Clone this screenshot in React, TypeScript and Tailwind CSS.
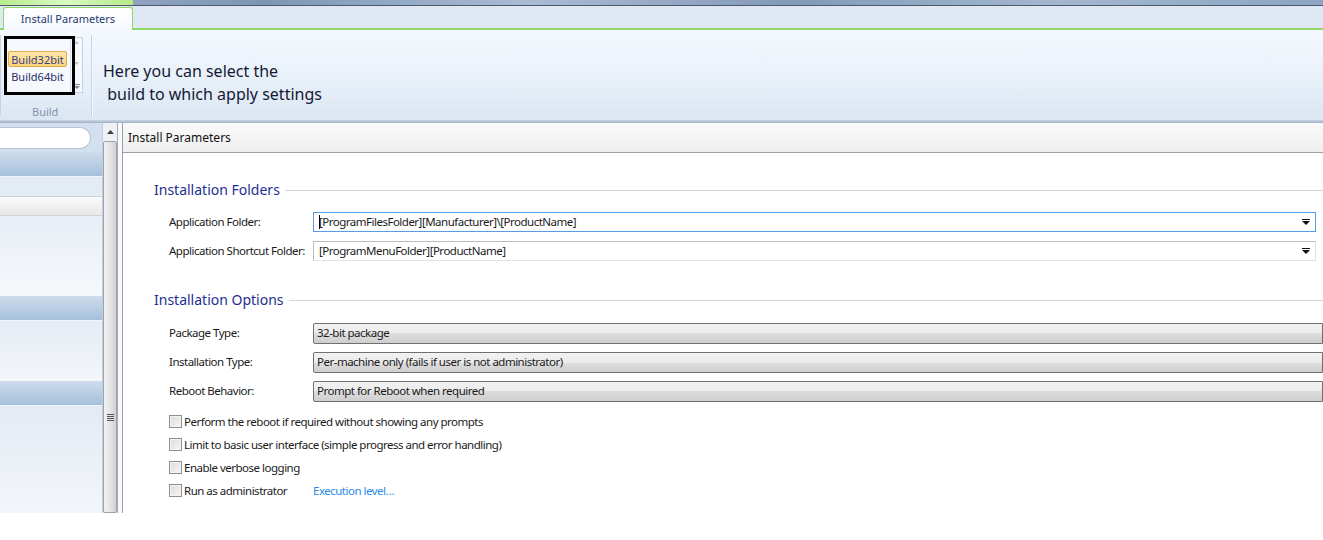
import React from 'react';

const font = { fontFamily: '"Noto Sans", "Open Sans", Arial, sans-serif' };

// compact text that stands in for Segoe UI 9pt
const small = 'text-[11.5px] tracking-[-0.5px] text-[#1a1a1a] whitespace-nowrap';

// little windows-7 style combo arrow
function ComboArrow() {
  return (
    <svg width="8" height="6" viewBox="0 0 8 6" className="shrink-0">
      <rect x="0" y="0" width="8" height="1" fill="#111" />
      <path d="M0 2 L8 2 L4 6 Z" fill="#111" />
    </svg>
  );
}

function SectionTitle({ title }: { title: string }) {
  return (
    <div className="flex items-center gap-[5px] pl-[31px] h-[22px]">
      <span className="text-[14px] text-[#1c2f8f] whitespace-nowrap leading-none">{title}</span>
      <div className="flex-1 h-px bg-[#d4d4d4]" />
    </div>
  );
}

function EditCombo({ label, value, focused }: { label: string; value: string; focused?: boolean }) {
  return (
    <div className="flex items-center h-[20px] pl-[46px]">
      <span className={`w-[144px] ${small}`}>{label}</span>
      <div
        className={
          focused
            ? 'flex items-center w-[1003px] h-[20px] bg-white border border-[#569de5] pl-[5px] pr-[5px]'
            : 'flex items-center w-[1003px] h-[20px] bg-white border border-[#bdbdbd] border-b-[#e3e3e3] border-r-[#e3e3e3] pl-[5px] pr-[5px]'
        }
      >
        {focused && <span className="w-px h-[14px] bg-black mr-[-1px]" />}
        <span className={`flex-1 ${small}`}>{value}</span>
        <ComboArrow />
      </div>
    </div>
  );
}

function DropList({ label, value }: { label: string; value: string }) {
  return (
    <div className="flex items-center h-[20px] pl-[46px]">
      <span className={`w-[144px] ${small}`}>{label}</span>
      <div className="flex items-center flex-1 h-[21px] border border-[#707070] rounded-l-[2px] bg-[linear-gradient(#f2f2f2_0%,#ebebeb_50%,#dddddd_50%,#cfcfcf_100%)] pl-[3px]">
        <span className={small}>{value}</span>
      </div>
    </div>
  );
}

function Check({ label, extra }: { label: string; extra?: string }) {
  return (
    <div className="flex items-center h-[13px] pl-[46px]">
      <span className="w-[13px] h-[13px] border border-[#8e8f8f] bg-[linear-gradient(135deg,#dcdcdc,#f6f6f6)] shadow-[inset_0_0_0_1px_#f4f4f4] shrink-0" />
      <span className={`ml-[2px] w-[129px] ${small}`}>{label}</span>
      {extra && <span className="text-[11.5px] tracking-[-0.5px] text-[#2a8ce6] whitespace-nowrap">{extra}</span>}
    </div>
  );
}

function LeftHeader() {
  return <div className="h-[25px] bg-[linear-gradient(#cedcec,#a5c0dc)] border-b border-[#f2f6fa]" />;
}

export default function App() {
  return (
    <div className="w-[1323px] h-[540px] bg-white overflow-hidden relative" style={font}>
      {/* top window strip */}
      <div className="h-[5px] flex bg-[linear-gradient(90deg,#9fb2cb,#7f95b5,#a8bcd4,#8499b8,#a3b8cf,#8ea3c1)]">
        <div className="w-[133px] h-full bg-[linear-gradient(90deg,#b7ec8d,#d9f9c2,#b5ea8a)]" />
      </div>
      <div className="h-px bg-[#4d5a6a]" />

      {/* tab row */}
      <div className="h-[24px] bg-[#dfe8f4] flex items-end relative border-b-[2px] border-[#8fd866]">
        <div className="ml-[3px] w-[130px] h-[23px] mb-[-2px] bg-[linear-gradient(#ffffff,#f5f9fe)] border border-b-0 border-[#8fd866] rounded-t-[3px] flex items-center justify-center">
          <span className="text-[11px] text-[#1e3a70]">Install Parameters</span>
        </div>
      </div>

      {/* ribbon */}
      <div className="h-[90px] bg-[linear-gradient(#f4f9fe,#e7eff8_60%,#dbe6f3)] flex relative">
        <div className="w-px h-[80px] mt-[5px] bg-[#c4d2e3]" />
        <div className="w-[90px] flex flex-col items-start">
          <div className="mt-[7px] ml-[4px] w-[78px] h-[57px] bg-[#f5f8fc] border border-[#c5d3e4] flex">
            <div className="flex-1 flex flex-col pt-[13px] pl-[2px] gap-[1px]">
              <div className="w-[59px] h-[16px] bg-[linear-gradient(#fde8a8,#fbd37a)] border border-[#e3a94a] rounded-[2px] flex items-center justify-center">
                <span className="text-[11px] text-[#3b3f86] leading-none">Build32bit</span>
              </div>
              <div className="w-[59px] h-[16px] flex items-center justify-center">
                <span className="text-[11px] text-[#2b2f66] leading-none">Build64bit</span>
              </div>
            </div>
            <div className="w-[12px] border-l border-[#d6e0ec] flex flex-col items-center justify-between py-[3px]">
              <svg width="5" height="3" viewBox="0 0 5 3"><path d="M0 3 L2.5 0 L5 3 Z" fill="#b8c2ce" /></svg>
              <svg width="5" height="3" viewBox="0 0 5 3"><path d="M0 0 L2.5 3 L5 0 Z" fill="#b8c2ce" /></svg>
              <svg width="6" height="5" viewBox="0 0 6 5"><rect width="6" height="1" fill="#7f8a99" /><path d="M0 2 L3 5 L6 2 Z" fill="#7f8a99" /></svg>
            </div>
          </div>
          <span className="mt-[11px] ml-[31px] text-[11px] text-[#8393ab]">Build</span>
        </div>
        <div className="w-px h-[82px] mt-[5px] bg-[#c4d2e3] shadow-[1px_0_0_#f8fbfe]" />
        <div className="ml-[11px] pt-[30px] text-[16px] leading-[23px] text-[#141a33] whitespace-pre">
          {'Here you can select the\n build to which apply settings'}
        </div>

        {/* annotation box */}
        <div className="absolute left-[4px] top-[6px] w-[71px] h-[59px] border-[3px] border-black" />
      </div>
      <div className="h-[3px] bg-[linear-gradient(#c9d5e3,#9fb0c6)]" />

      {/* body */}
      <div className="flex h-[390px]">
        {/* left nav */}
        <div className="w-[103px] flex flex-col bg-[#d3e0ef] border-r border-[#c3cfdc]">
          <div className="h-[29px] flex items-center">
            <div className="w-[91px] h-[22px] bg-white border border-[#b8c4d2] border-l-0 rounded-r-[11px]" />
          </div>
          <LeftHeader />
          <div className="h-[20px] bg-[#e3ebf5] border-b border-[#c9d3de]" />
          <div className="h-[19px] bg-[linear-gradient(#fbfbfb,#e7e7e7)] border-b border-[#d3d3d3]" />
          <div className="h-[80px] bg-[linear-gradient(#e8eef6,#f5f8fb)]" />
          <LeftHeader />
          <div className="h-[60px] bg-[linear-gradient(#e6ecf5,#f3f6fa)]" />
          <LeftHeader />
          <div className="flex-1 bg-[linear-gradient(#e4eaf4,#f3f6fa)]" />
        </div>

        {/* scrollbar */}
        <div className="w-[15px] flex flex-col items-center bg-[#eef2f6] border-r border-[#a5acb5]">
          <div className="h-[18px] flex items-center justify-center">
            <svg width="7" height="4" viewBox="0 0 7 4"><path d="M0 4 L3.5 0 L7 4 Z" fill="#3d3d3d" /></svg>
          </div>
          <div className="flex-1 w-[14px] border border-[#9ba3ad] rounded-[2px] bg-[linear-gradient(90deg,#f2f2f2,#e2e2e2_60%,#cfcfcf)] flex items-center justify-center">
            <svg width="7" height="7" viewBox="0 0 7 7" className="mt-[180px]">
              <rect y="0" width="7" height="1" fill="#555" />
              <rect y="2" width="7" height="1" fill="#555" />
              <rect y="4" width="7" height="1" fill="#555" />
              <rect y="6" width="7" height="1" fill="#555" />
            </svg>
          </div>
        </div>
        <div className="w-[5px] bg-[#f7f9fb] border-r border-[#a0a0a0]" />

        {/* main panel */}
        <div className="flex-1 flex flex-col">
          <div className="h-[30px] bg-[linear-gradient(#fafafa,#efefef)] border-b border-[#9f9f9f] flex items-center pl-[5px]">
            <span className="text-[12px] text-[#111]">Install Parameters</span>
          </div>
          <div className="flex-1 bg-white flex flex-col pt-[26px]">
            <SectionTitle title="Installation Folders" />
            <div className="mt-[11px] flex flex-col gap-[9px]">
              <EditCombo label="Application Folder:" value="[ProgramFilesFolder][Manufacturer]\[ProductName]" focused />
              <EditCombo label="Application Shortcut Folder:" value="[ProgramMenuFolder][ProductName]" />
            </div>
            <div className="mt-[28px]">
              <SectionTitle title="Installation Options" />
            </div>
            <div className="mt-[12px] flex flex-col gap-[9px]">
              <DropList label="Package Type:" value="32-bit package" />
              <DropList label="Installation Type:" value="Per-machine only (fails if user is not administrator)" />
              <DropList label="Reboot Behavior:" value="Prompt for Reboot when required" />
            </div>
            <div className="mt-[14px] flex flex-col gap-[10px]">
              <Check label="Perform the reboot if required without showing any prompts" />
              <Check label="Limit to basic user interface (simple progress and error handling)" />
              <Check label="Enable verbose logging" />
              <Check label="Run as administrator" extra="Execution level…" />
            </div>
          </div>
        </div>
      </div>
    </div>
  );
}
